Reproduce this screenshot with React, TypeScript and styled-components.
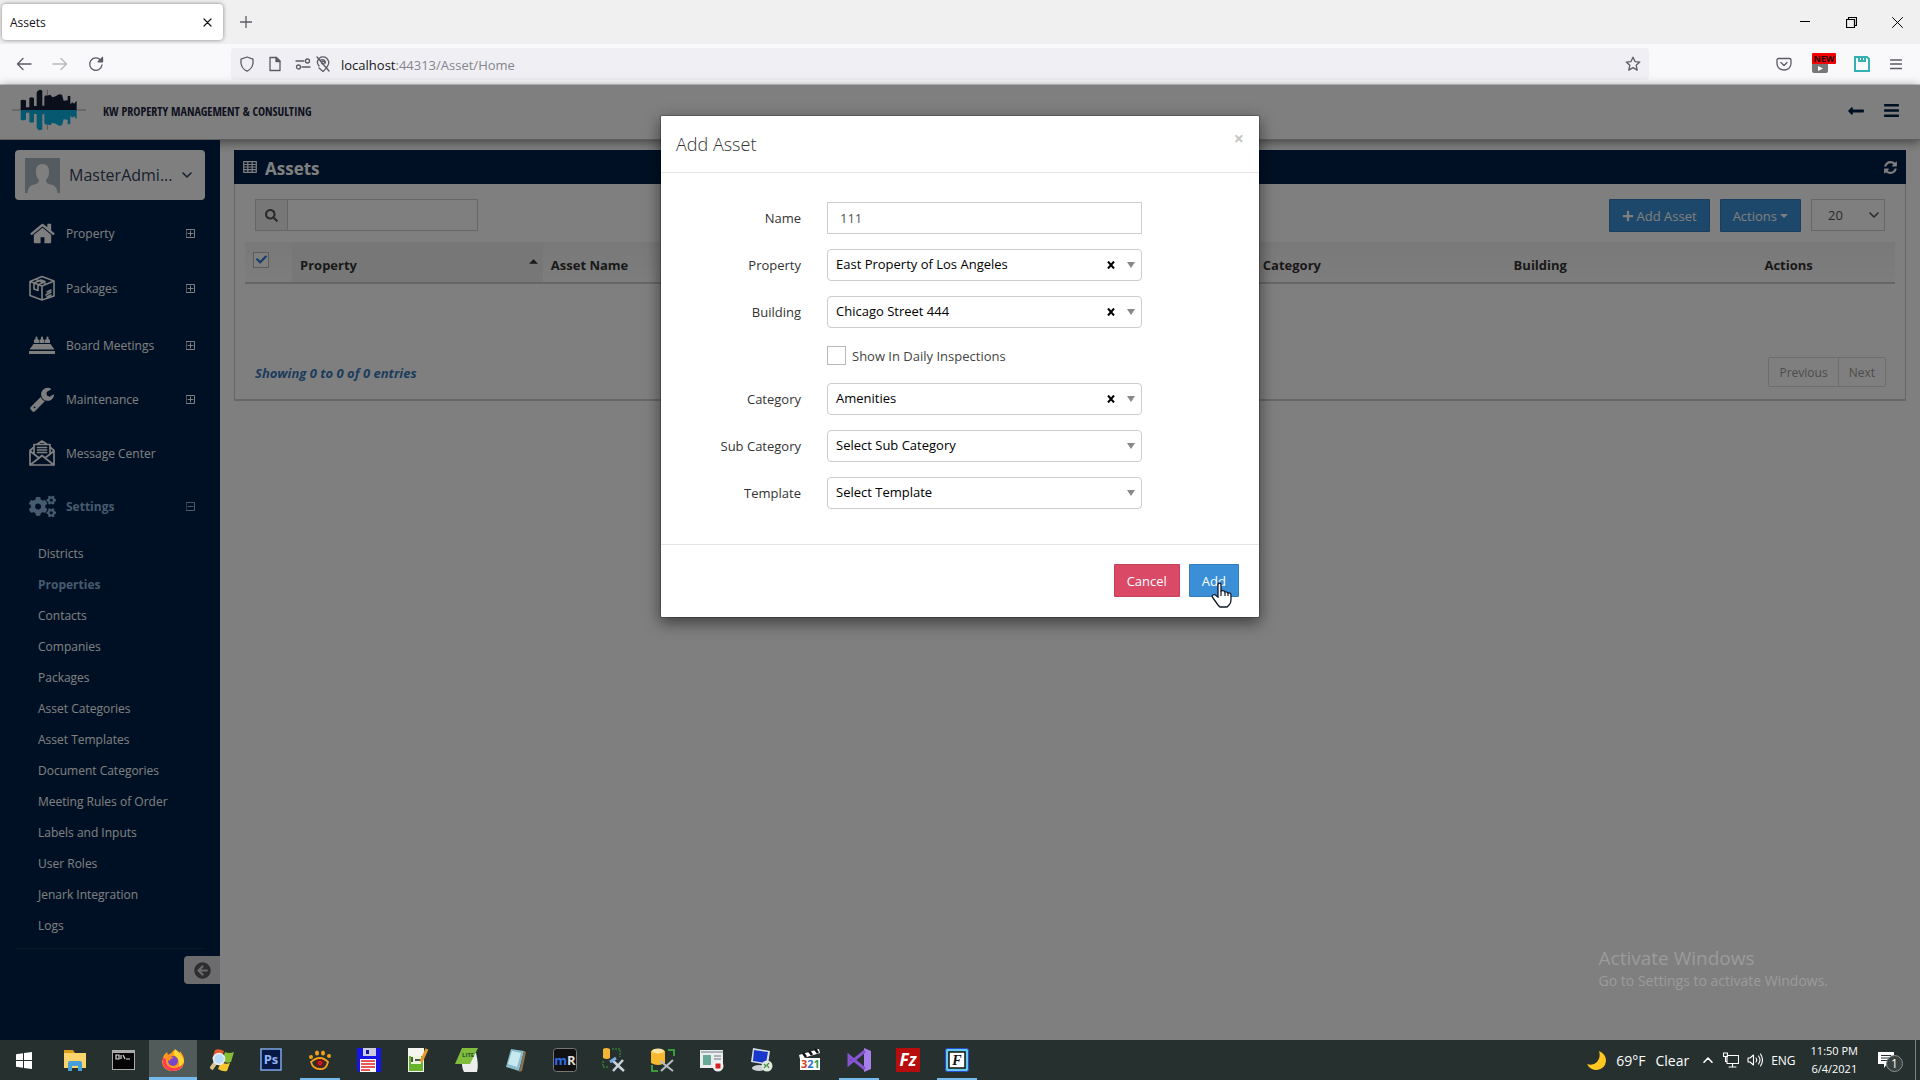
import React, { useState } from 'react';
import styled, { createGlobalStyle, css } from 'styled-components';
import { FaArrowCircleLeft, FaBars, FaCogs, FaLongArrowAltLeft, FaPlus, FaSearch, FaCheck } from 'react-icons/fa';

const colors = {
  navy: '#002048',
  blue: '#3b8fd6',
  red: '#da4a67',
  border: '#cccccc',
  taskbar: '#25302f',
};

const GlobalStyle = createGlobalStyle`
  * { box-sizing: border-box; }
  body { margin: 0; font-family: "Open Sans", "Noto Sans", sans-serif; font-size: 13px; color: #333; }
  button, input, select { font: inherit; color: inherit; margin: 0; }
  button { border: 0; padding: 0; background: none; cursor: pointer; }
  a { color: inherit; text-decoration: none; }
  ul { list-style: none; margin: 0; padding: 0; }
  svg { display: block; flex: none; }
`;

const Screen = styled.div`
  min-height: 100vh;
  display: flex;
  flex-direction: column;
  overflow: hidden;
`;

/* ---------- browser ---------- */

const TabStrip = styled.div`
  height: 44px;
  background: #f0f0f0;
  display: flex;
  align-items: center;
  padding-left: 2px;
`;
const Tab = styled.div`
  width: 221px;
  height: 36px;
  padding: 0 8px;
  display: flex;
  align-items: center;
  justify-content: space-between;
  background: #fff;
  border-radius: 4px;
  box-shadow: 0 0 4px rgba(0, 0, 0, 0.45);
  font-size: 12px;
  color: #15141a;
`;
const ChromeButton = styled.button<{ $w?: number; $faded?: boolean }>`
  width: ${(p) => p.$w ?? 36}px;
  height: 32px;
  display: flex;
  align-items: center;
  justify-content: center;
  color: #5b5b66;
  opacity: ${(p) => (p.$faded ? 0.4 : 1)};
`;
const WindowControls = styled.div`
  margin-left: auto;
  display: flex;
  & > button { color: #000; }
`;
const NavBar = styled.div`
  height: 41px;
  background: #f9f9fb;
  border-bottom: 1px solid #cccccc;
  display: flex;
  align-items: center;
  padding: 0 6px;
`;
const UrlField = styled.div`
  flex: 1;
  max-width: 1418px;
  margin-left: 117px;
  height: 32px;
  border-radius: 4px;
  background: #f0f0f4;
  display: flex;
  align-items: center;
  padding: 0 8px;
  color: #5b5b66;
`;
const UrlIcons = styled.div<{ $tight?: boolean }>`
  display: flex;
  align-items: center;
  gap: ${(p) => (p.$tight ? 4 : 12)}px;
  margin-right: ${(p) => (p.$tight ? 0 : 10)}px;
`;
const Address = styled.div`
  flex: 1;
  padding-top: 1px;
  color: #85858d;
  b { font-weight: 400; color: #15141a; }
`;
const Extensions = styled.div`
  margin-left: auto;
  display: flex;
`;
const NewBadge = styled.span`
  display: grid;
  justify-items: start;
  width: 24px;
  height: 22px;
  b {
    grid-area: 1 / 1;
    z-index: 1;
    width: 24px;
    height: 11px;
    border-radius: 1px;
    background: #f50000;
    color: #200000;
    font-size: 9px;
    line-height: 11px;
    text-align: center;
  }
  svg { grid-area: 1 / 1; margin-top: 8px; }
`;

/* ---------- page ---------- */

const Page = styled.div`
  position: relative;
  flex: 1;
  display: flex;
  flex-direction: column;
  background: #fff;
`;
const PageHeader = styled.header`
  height: 55px;
  display: flex;
  align-items: center;
  padding: 0 20px 2px 12px;
  border-bottom: 1px solid #bbb;
  box-shadow: 0 2px 10px rgba(0, 0, 0, 0.5);
  color: ${colors.navy};
`;
const Brand = styled.a`
  display: flex;
  align-items: center;
  gap: 17px;
  color: #1c2440;
  font: 700 12px "Open Sans Condensed", "Roboto Condensed", "Liberation Sans Narrow", "Liberation Sans", sans-serif;
`;
const HeaderTools = styled.div`
  margin-left: auto;
  display: flex;
  gap: 18px;
`;
const Columns = styled.div`
  flex: 1;
  display: flex;
`;
const Sidebar = styled.nav`
  position: relative;
  width: 220px;
  flex: none;
  background: ${colors.navy};
  color: #fff;
  padding: 10px 0 0;
  display: flex;
  flex-direction: column;
`;
const UserButton = styled.button`
  margin: 0 15px 7px;
  height: 50px;
  padding: 0 18px 0 10px;
  display: flex;
  align-items: center;
  gap: 9px;
  border-radius: 4px;
  background: #fff;
  color: #33425c;
  font-size: 16px;
  svg:last-child { margin-left: auto; }
`;
const active = css`
  color: #8bb4dd;
  font-weight: 700;
`;
const MenuLink = styled.a<{ $active?: boolean; $h: number }>`
  height: ${(p) => p.$h}px;
  padding: 0 25px 0 29px;
  display: grid;
  grid-template-columns: 26px 1fr 9px;
  column-gap: 11px;
  align-items: center;
  font-size: 12px;
  ${(p) => p.$active && active}
`;
const SubMenu = styled.ul`
  margin: 7px 15px 0;
  padding-bottom: 7px;
  border-bottom: 1px solid #18324f;
`;
const SubLink = styled.a<{ $active?: boolean }>`
  height: 31px;
  padding-left: 23px;
  display: flex;
  align-items: center;
  font-size: 12px;
  ${(p) => p.$active && active}
`;
const CollapseButton = styled.button`
  align-self: flex-end;
  margin-top: 7px;
  width: 36px;
  height: 28px;
  padding-left: 10px;
  border-radius: 4px 0 0 4px;
  background: #d8d8de;
  color: #5c5c5f;
`;
const Content = styled.main`
  flex: 1;
  min-width: 0;
  padding: 10px 14px 0;
`;
const Panel = styled.section`
  border: 1px solid ${colors.border};
  border-top: 0;
  border-bottom-width: 2px;
`;
const PanelHeading = styled.header`
  height: 34px;
  margin: 0 -1px;
  padding: 0 8px 0 9px;
  display: flex;
  align-items: center;
  gap: 8px;
  background: ${colors.navy};
  color: #fff;
  h1 { margin: 0; padding-top: 2px; font-size: 17px; font-weight: 700; }
  button { margin-left: auto; }
`;
const Toolbar = styled.div`
  display: flex;
  gap: 10px;
  padding: 15px 20px 10px;
`;
const SearchGroup = styled.label`
  width: 223px;
  height: 32px;
  margin-right: auto;
  display: flex;
  border: 1px solid ${colors.border};
  span {
    width: 32px;
    display: flex;
    align-items: center;
    justify-content: center;
    background: #eee;
    border-right: 1px solid ${colors.border};
    color: #555;
  }
  input { flex: 1; min-width: 0; border: 0; outline: 0; background: #fff; }
`;
const Button = styled.button<{ $tone?: 'red' }>`
  height: 33px;
  padding: 0 12px;
  display: flex;
  align-items: center;
  gap: 3px;
  border: 1px solid rgba(0, 0, 0, 0.12);
  border-radius: 1px;
  background: ${(p) => (p.$tone === 'red' ? colors.red : colors.blue)};
  color: #fff;
`;
const PageSize = styled.div`
  width: 74px;
  height: 32px;
  display: flex;
  align-items: center;
  padding: 0 5px 0 16px;
  border: 1px solid ${colors.border};
  color: #555;
  select { flex: 1; min-width: 0; border: 0; padding: 0; background: none; appearance: none; outline: 0; }
`;
const TableWrap = styled.div`
  padding: 0 10px;
`;
const Table = styled.table`
  width: 100%;
  table-layout: fixed;
  border-collapse: separate;
  border-spacing: 0;
`;
const Th = styled.th<{ $sorted?: boolean }>`
  height: 42px;
  padding: 5px 8px 0;
  border-bottom: 2px solid ${colors.border};
  background: ${(p) => (p.$sorted ? '#efefef' : 'linear-gradient(#f2f2f2, #fbfbfb)')};
  text-align: left;
  color: #333;
`;
const SortLabel = styled.div`
  display: flex;
  justify-content: space-between;
  padding-right: 5px;
  & > svg { margin-top: 3px; }
  margin-right: -8px;
`;
const CheckBox = styled.input<{ $tall?: boolean }>`
  appearance: none;
  display: block;
  flex: none;
  width: ${(p) => (p.$tall ? 19 : 16)}px;
  height: ${(p) => (p.$tall ? 19 : 16)}px;
  margin: 0;
  border: 1px solid #b8b8b8;
  background: #fff;
`;
const HeadCheck = styled.label`
  display: grid;
  width: 16px;
  margin-top: -10px;
  & > * { grid-area: 1 / 1; place-self: center; }
  svg { color: #2a7bd0; }
`;
const PanelFooter = styled.footer`
  display: flex;
  align-items: center;
  justify-content: space-between;
  padding: 73px 19px 12px 20px;
  em { padding-top: 2px; font-weight: 700; color: #3879b9; }
`;
const Pager = styled.div`
  display: flex;
  height: 30px;
  border: 1px solid #ddd;
  border-radius: 2px;
  button { padding: 0 10px; color: #999; font-size: 12px; }
  button + button { border-left: 1px solid #ddd; }
`;

/* ---------- dialog ---------- */

const Backdrop = styled.div`
  position: absolute;
  inset: 0;
  padding-top: 30px;
  display: flex;
  justify-content: center;
  align-items: flex-start;
  background: rgba(0, 0, 0, 0.5);
`;
const Dialog = styled.div`
  width: 600px;
  border: 1px solid rgba(0, 0, 0, 0.2);
  border-radius: 2px;
  background: #fff;
  background-clip: padding-box;
  box-shadow: 0 5px 15px rgba(0, 0, 0, 0.5);
`;
const DialogHeader = styled.header`
  height: 57px;
  padding: 0 15px;
  display: flex;
  align-items: center;
  justify-content: space-between;
  border-bottom: 1px solid #e5e5e5;
  h2 { margin: 0; font-size: 18px; font-weight: 300; }
  button { align-self: flex-start; margin-top: 13px; color: #c6c6c6; font-size: 18px; line-height: 18px; font-weight: 700; }
`;
const Form = styled.form`
  display: grid;
  grid-template-columns: 140px 315px;
  column-gap: 26px;
  row-gap: 15px;
  align-items: center;
  padding: 29px 0 35px;
`;
const FieldLabel = styled.label`
  text-align: right;
`;
const TextField = styled.input`
  height: 32px;
  padding: 0 12px;
  border: 1px solid ${colors.border};
  outline: 0;
  color: #555;
`;
const SelectField = styled.div`
  height: 32px;
  display: flex;
  align-items: center;
  padding: 0 6px 0 8px;
  border: 1px solid ${colors.border};
  border-radius: 4px;
  color: #000;
  select { flex: 1; min-width: 0; border: 0; padding: 0 0 2px; background: none; appearance: none; outline: 0; }
  button { margin-right: 12px; padding-bottom: 1px; }
`;
const CheckLine = styled.label`
  grid-column: 2;
  height: 25px;
  display: flex;
  align-items: center;
  gap: 6px;
  color: #444;
`;
const DialogFooter = styled.footer`
  display: flex;
  justify-content: flex-end;
  gap: 9px;
  padding: 19px 20px 20px;
  border-top: 1px solid #e5e5e5;
`;
const PointerAnchor = styled.div`
  position: relative;
  & > svg { position: absolute; left: 22px; top: 18px; pointer-events: none; }
`;
const Watermark = styled.div`
  position: absolute;
  right: 92px;
  bottom: 48px;
  color: #9b9b9b;
  font-size: 14px;
  line-height: 22px;
  strong { display: block; font-weight: 400; font-size: 19px; line-height: 24px; }
`;

/* ---------- taskbar ---------- */

const Taskbar = styled.footer`
  height: 40px;
  background: ${colors.taskbar};
  color: #fff;
  display: flex;
  justify-content: space-between;
`;
const Apps = styled.div`
  display: flex;
  gap: 1px;
  padding-left: 2px;
`;
const AppButton = styled.button<{ $open?: boolean; $focused?: boolean }>`
  width: 48px;
  height: 40px;
  padding-top: 3px;
  display: flex;
  align-items: center;
  justify-content: center;
  border-bottom: 3px solid transparent;
  ${(p) => p.$open && css`
    background: linear-gradient(#76b9ed, #76b9ed) center bottom / 40px 2px no-repeat;
    background-origin: border-box;
    background-clip: border-box;
  `}
  ${(p) => p.$focused && css`
    background: #515b5a;
    border-bottom-color: #76b9ed;
  `}
`;
const Tray = styled.div`
  display: flex;
  align-items: center;
  font-size: 12px;
  padding-right: 4px;
`;
const Weather = styled.button`
  display: flex;
  align-items: center;
  gap: 10px;
  font-size: 14px;
  color: #fff;
  margin-right: 14px;
`;
const TrayIcons = styled.div`
  display: flex;
  align-items: center;
  gap: 8px;
  & > svg:first-child { margin-right: 2px; }
`;
const Clock = styled.time`
  margin: 0 20px 0 15px;
  text-align: center;
  line-height: 18px;
  font-size: 11px;
`;
const Notice = styled.button`
  position: relative;
  width: 25px;
  height: 26px;
  span {
    position: absolute;
    left: 8px;
    top: 8px;
    width: 17px;
    height: 17px;
    border: 1px solid #8b9190;
    border-radius: 50%;
    background: #38403f;
    color: #fff;
    font-size: 12px;
    line-height: 15px;
  }
`;
const DesktopEdge = styled.div`
  width: 1px;
  height: 40px;
  margin-left: 12px;
  background: #7c8382;
`;

/* ---------- drawings ---------- */

type IconProps = { w?: number; h?: number; box?: string; children: React.ReactNode };
const Line = ({ w = 16, h = w, box = '0 0 16 16', children }: IconProps) => (
  <svg width={w} height={h} viewBox={box} fill="none" stroke="currentColor" strokeWidth="1.3" strokeLinecap="round" strokeLinejoin="round" aria-hidden="true">{children}</svg>
);
const Solid = ({ w = 16, h = w, box = '0 0 1792 1792', children }: IconProps) => (
  <svg width={w} height={h} viewBox={box} fill="currentColor" aria-hidden="true">{children}</svg>
);

const Skyline = () => {
  const d = 'M32 75V46q5-3 16 0V67H58V39q7-4 14 0V63H80V22q7-13 17-5V62H103V36q3-7 8-4l10-3 6 8 10-3 10-6 9 1 5 18 12-1V34q4-3 8 0V58l6-6 5 4 8-9V75z';
  return (
    <svg width="74" height="52" viewBox="6 0 222 156" aria-hidden="true">
      <path d="M6 75H228M112 14V134" stroke="#a5a5a5" strokeWidth="3" />
      <path d={d} fill="#171f38" />
      <path d={d} fill="#0ab0e0" transform="matrix(1 0 0 -1 0 150)" />
    </svg>
  );
};
const Avatar = () => (
  <svg width="35" height="35" viewBox="0 0 35 35" aria-hidden="true">
    <path fill="#a9b8c2" d="M0 0h35v35H0z" />
    <path fill="#fff" d="M17.500 6c5 0 7 4 6.500 9-.5 4-1.500 5-3 7 .3 3 1 3.500 5 4.500 4 1.200 6 3 6.500 8.500H2.500c.5-5.500 2.500-7.300 6.500-8.500 4-1 4.700-1.500 5-4.500-1.500-2-2.500-3-3-7C10.500 10 12.500 6 17.500 6z" />
  </svg>
);
const Home = () => <Solid w={27}><path d="M1472 992v480q0 26-19 45t-45 19h-384v-384h-256v384h-384q-26 0-45-19t-19-45v-480q0-1 .5-3t.5-3l575-474 575 474q1 2 1 6zm223-69l-62 74q-8 9-21 11h-3q-13 0-21-7l-692-577-692 577q-12 8-24 7-13-2-21-11l-62-74q-8-10-7-23.500t11-21.500l719-599q32-26 76-26t76 26l244 204v-195q0-14 9-23t23-9h192q14 0 23 9t9 23v408l219 182q10 8 11 21.500t-7 23.500z" /></Solid>;
const Wrench = () => <Solid w={26}><path d="M448 1472q0-26-19-45t-45-19-45 19-19 45 19 45 45 19 45-19 19-45zm644-420l-682 682q-37 37-90 37-52 0-91-37l-106-108q-38-36-38-90 0-53 38-91l681-681q39 98 114.500 173.500t173.500 114.500zm634-435q0 39-23 106-47 134-164.500 217.500t-258.500 83.500q-185 0-316.500-131.500t-131.500-316.500 131.500-316.500 316.500-131.500q58 0 121.500 16.500t107.500 46.500q16 11 16 28t-16 28l-293 169v224l193 107q5-3 79-48.500t135.500-81 70.500-35.500q15 0 23.500 10t8.500 25z" /></Solid>;
const Refresh = () => <Solid w={15}><path d="M1639 1056q0 5-1 7-64 268-268 434.500t-478 166.500q-146 0-282.500-55t-243.500-157l-129 129q-19 19-45 19t-45-19-19-45v-448q0-26 19-45t45-19h448q26 0 45 19t19 45-19 45l-137 137q71 66 161 102t187 36q134 0 250-65t186-179q11-17 53-117 8-23 30-23h192q13 0 22.500 9.500t9.500 22.500zm25-800v448q0 26-19 45t-45 19h-448q-26 0-45-19t-19-45 19-45l138-138q-148-137-349-137-134 0-250 65t-186 179q-11 17-53 117-8 23-30 23h-199q-13 0-22.500-9.500t-9.500-22.500v-7q65-268 270-434.500t480-166.500q146 0 284 55.500t245 156.500l130-129q19-19 45-19t45 19 19 45z" /></Solid>;
const Box = () => (
  <Line w={26} box="0 0 26 26">
    <path strokeWidth="1.600" d="M1 6.500 13 1.500l12 4.500v15L13 25 1 20.500zM1 6.500 13 11l12-5M13 11v14M5 8v6l4 1.500V10l7-3.500-4-1.500zM8 5l8 3M22 15l-4 2M22 17l-5 3M22 20l-4 2" />
  </Line>
);
const Board = () => (
  <Solid w={26} h={18} box="0 0 26 18">
    <path d="M5 7V4l1.500-1V1.500a1 1 0 0 1 2 0V3L10 4v3zM10.500 7V4L12 3V1.500a1 1 0 0 1 2 0V3l1.500 1v3zM16 7V4l1.500-1V1.500a1 1 0 0 1 2 0V3L21 4v3zM4.500 8h17l4 5.500H.5zM0 15h26v3H0z" />
  </Solid>
);
const Mail = () => (
  <Line w={26} box="0 0 26 26">
    <path strokeWidth="1.700" d="M5 7 1 10.500V25h24V10.500L21 7M8.500 4 13 1l4.500 3M5 14V4.500h16V14M8.500 7.500h9M8.500 10h9M8.500 12.500h9M1 11l9 7-9 7M25 11l-9 7 9 7M10 18l3-2.500 3 2.500" />
  </Line>
);
const Expander = ({ open }: { open?: boolean }) => (
  <Line w={9} box="0 0 9 9"><path strokeWidth="1" d={`M.5.500h8v8h-8zM2 4.500h5${open ? '' : 'M4.500 2v5'}`} /></Line>
);
const Caret = ({ up }: { up?: boolean }) => (
  <Solid w={up ? 9 : 8} h={up ? 5 : 4} box="0 0 10 5"><path d={up ? 'M0 5 5 0l5 5z' : 'M0 0h10L5 5z'} /></Solid>
);
const Chevron = ({ up }: { up?: boolean }) => (
  <Line w={10} h={6} box="0 0 10 6"><path strokeWidth="1.600" d={up ? 'M1 5.200 5 1l4 4.200' : 'M1 1l4 4 4-4'} /></Line>
);
const Grid = () => (
  <Line w={14} h={12} box="0 0 14 12"><path strokeWidth="1.200" d="M.7.700h12.600v10.600H.7zM.7 3.500h12.600M.7 6h12.600M.7 8.700h12.600M4.800 1v10M9.200 1v10" /></Line>
);
const Hand = () => (
  <svg width="21" height="26" viewBox="0 0 21 26" aria-hidden="true">
    <path d="M7 15V3q0-2 1.500-2T10 3v6q3-1 4 1 2-.7 3 1 3-.5 3 2v5q0 3-2 5l-2 2H9l-2-2-5-7q-1.500-2 0-3 2-1 3.500 1z" fill="#fff" stroke="#101828" strokeWidth="1.300" />
    <path d="M10 9v5M14 10v4M17 11v3" stroke="#101828" strokeWidth="1.200" />
  </svg>
);

const taskIcons: { name: string; open?: boolean; focused?: boolean; art: React.ReactNode }[] = [
  { name: 'Start', art: <path fill="#fff" d="M2 6.200 9 5.200V12H2zM10 5 18 4v8h-8zM2 13h7v6.800l-7-1zM10 13h8v8l-8-1z" /> },
  { name: 'Files', art: <><path fill="#dc9e1e" d="M1 2h9l2 3v5H1z" /><path fill="#fbd46b" d="M1 5h22v15H1z" /><path fill="#459fdb" d="M5 23v-8q0-2 2-2h10q2 0 2 2v8h-4v-5H9v5z" /></> },
  { name: 'Prompt', art: <><path fill="#aaa" d="M0 2h23v20H0z" /><path fill="#050505" d="M1 5h21v16H1z" /><path stroke="#ddd" strokeWidth="1.200" fill="none" d="M4 7h3v4H4zM9 7v4M11 7l2 4M14 11h4" /></> },
  { name: 'Firefox', focused: true, art: <><path fill="#ff9a1f" d="M2 10q1-4 4-6l1 3q4-2 6-5 4 3 4 6 2-3 2-5 5 6 4 12-2 8-11 8Q2 23 1 14z" /><path fill="#ff3d57" d="M2 10q-2 12 10 13 8 0 10-7-5 5-11 4-7-2-6-9z" /><path fill="#ffd72e" d="M14 1q7 5 9 12-2 5-5 6 1-9-5-12-1-3 1-6z" /><circle cx="12" cy="13" r="5" fill="#7646c8" /><path fill="#ff8b20" d="M5 9q5-2 8 1-4 0-4 3-3-1-4-4z" /></> },
  { name: 'Finder', art: <><path fill="#e75c2c" d="M5 2q4-2 9 1l-3 9q-4-3-9-1z" /><path fill="#86bd36" d="M15 4q4 2 9 0l-3 10q-4 2-9-1z" /><path fill="#f6c62d" d="M11 14q4 3 9 1l-3 8q-4 1-9-2z" /><path stroke="#d8c48a" strokeWidth="4" d="m6 14-5 7" /><circle cx="9" cy="11" r="5.500" fill="#b8dcfa" stroke="#e9eef2" strokeWidth="1.500" /></> },
  { name: 'Photo editor', art: <><path fill="#071847" stroke="#7ea6e8" strokeWidth="1.500" d="M2 1h20v21H2z" /><text x="12" y="16" textAnchor="middle" fontSize="13" fontWeight="700" fill="#8fb6f5">Ps</text></> },
  { name: 'Paw', open: true, art: <><g fill="#f5a01b"><ellipse cx="3" cy="9" rx="2" ry="2" /><ellipse cx="9" cy="5" rx="2" ry="2.500" /><ellipse cx="15" cy="5" rx="2" ry="2.500" /><ellipse cx="21" cy="8" rx="2" ry="2" /></g><path d="M3 14q9-8 17 0-2 8-8 7-7 0-9-7z" stroke="#f5a01b" strokeWidth="1.800" fill="#25302f" /><circle cx="12" cy="15" r="4" fill="#7d1010" /><circle cx="12" cy="15" r="1.500" stroke="#e33" fill="none" /></> },
  { name: 'Commander', art: <><path fill="#1515e8" d="M0 0h24v24H2l-2-2z" /><path fill="#ccd" d="M6 0h13v8H6z" /><path fill="#1515a0" d="M9 2h3v4H9z" /><path fill="#fff" d="M3 11h16v13H3z" /><path stroke="#e02020" strokeWidth="1.500" d="M4 13h14M4 16h14M4 19h14M4 22h9" /></> },
  { name: 'Notes', art: <><path fill="#f5f5f0" d="M2 0h16v24H2z" /><path fill="#67b52e" d="M3 8h14v15H3z" /><path fill="#e8f5d8" d="M5 8h10v8H5z" /><path d="M6 9v5M9 12h6" stroke="#222" strokeWidth="1.500" /><path stroke="#e59a2a" strokeWidth="3" d="m21 1-6 13" /></> },
  { name: 'Spreadsheet', art: <><path fill="#ededed" d="M7 5h14q3 12 1 19H9q-3-4-2-19z" /><path fill="#80bd3d" d="M7 0h16l-8 16H0z" /><text x="7" y="9" fontSize="6" fontWeight="700" fill="#25502a">LITE</text></> },
  { name: 'Notepad', art: <><path fill="#89bdcc" d="m7 1 13 2-5 20-13-4z" /><path fill="#c8e9ef" d="m8 3 9 2-4 14-9-3z" /><path fill="#8b7355" d="m20 3 2 1-4 19-3 1z" /></> },
  { name: 'Remote', art: <><rect x=".5" y=".5" width="23" height="23" rx="3" fill="#111" stroke="#777" /><text x="12" y="17" textAnchor="middle" fontSize="13" fontWeight="700"><tspan fill="#2e6be8">m</tspan><tspan fill="#ddd">R</tspan></text></> },
  { name: 'Data tools', art: <><path fill="#f3b735" d="M1 1q3-2 7 0v9q-3 2-7 0z" /><path fill="none" stroke="#39a13d" strokeDasharray="2 1" d="M10 1h8v8M1 13v6h6" /><path stroke="#c9d4dd" strokeWidth="2.500" d="m10 12 12 11M21 12 11 23" /><path stroke="#79aee0" strokeWidth="3" d="m8 14 6-4" /></> },
  { name: 'Database', art: <><path fill="#f9b92e" d="M0 3q7-4 14 0v12q-7 4-14 0z" /><ellipse cx="7" cy="3" rx="6" ry="2.500" fill="#ffe5a0" /><path fill="none" stroke="#3b9a3b" strokeWidth="2" d="M17 2h6v6M1 17v6h6" /><path stroke="#b8bfc2" strokeWidth="2" d="m9 13 13 10M22 12 10 23" /></> },
  { name: 'Recorder', art: <><path fill="#e9edf0" d="M0 2h23v18H0z" /><path fill="#66aa97" d="M3 7h8v10H3z" /><path stroke="#98a0a5" strokeWidth="1.500" d="M14 8h7M14 11h7M1 4h22" /><circle cx="18" cy="18" r="5.500" fill="#f2f2f2" /><path fill="#d42222" d="M15.500 15.500h5v5h-5z" /></> },
  { name: 'Display', art: <><path fill="#d7dfe4" d="m4 0 17 3-2 14-17-3z" /><path fill="#1838cc" d="m5 2 14 2-2 11-13-2z" /><ellipse cx="10" cy="20" rx="7" ry="3" fill="#cdd2d5" /><circle cx="18" cy="18" r="5.500" fill="#dfe9df" /><path d="m15 16 2 2-2 2M20 15l-2 2 2 3" stroke="#3b8a3b" strokeWidth="1.200" fill="none" /></> },
  { name: 'Media', art: <><path fill="#fff" d="m1 7 20-6 1 4-20 6zM2 10h20v12H2z" /><path stroke="#111" strokeWidth="2.500" d="m5 5 3 4M11 3l3 4M17 1l3 4" /><text x="3" y="20" fontSize="11" fontWeight="700"><tspan fill="#d5402a">3</tspan><tspan fill="#2d72c4">2</tspan><tspan fill="#329a3c">1</tspan></text></> },
  { name: 'Studio', open: true, art: <><path fill="#a880ea" d="m17 0 7 3v18l-7 3z" /><path fill="none" stroke="#8654cf" strokeWidth="3" d="m18 3-16 13V8l16 13" /></> },
  { name: 'Transfer', art: <><path fill="#b80d0d" d="M0 0h24v24H0z" /><text x="12" y="18" textAnchor="middle" fontSize="17" fontStyle="italic" fontWeight="700" fill="#fff">Fz</text></> },
  { name: 'Fonts', open: true, art: <><rect x=".5" y=".5" width="23" height="23" rx="2" fill="#65c9e8" stroke="#2b48dc" /><path fill="#fff" stroke="#111" strokeWidth="1.500" d="M4 4h16v16H4z" /><text x="12" y="17" textAnchor="middle" fontSize="14" fontStyle="italic" fontWeight="700" fontFamily="Liberation Serif" fill="#111">F</text></> },
];

/* ---------- parts ---------- */

const menu = [
  { label: 'Property', icon: <Home />, fold: true, height: 52 },
  { label: 'Packages', icon: <Box />, fold: true, height: 58 },
  { label: 'Board Meetings', icon: <Board />, fold: true, height: 56 },
  { label: 'Maintenance', icon: <Wrench />, fold: true, height: 52 },
  { label: 'Message Center', icon: <Mail />, height: 56 },
  { label: 'Settings', icon: <FaCogs size={27} />, fold: true, open: true, height: 50 },
];
const settings = ['Districts', 'Properties', 'Contacts', 'Companies', 'Packages', 'Asset Categories', 'Asset Templates', 'Document Categories', 'Meeting Rules of Order', 'Labels and Inputs', 'User Roles', 'Jenark Integration', 'Logs'];

function Chooser({ label, value, clearable }: { label: string; value: string; clearable?: boolean }) {
  const id = label.toLowerCase().replace(' ', '-');
  return (
    <>
      <FieldLabel htmlFor={id}>{label}</FieldLabel>
      <SelectField>
        <select id={id} defaultValue={value}><option>{value}</option></select>
        {clearable && (
          <button type="button" aria-label={`Clear ${label}`}>
            <Line w={8} box="0 0 8 8"><path strokeWidth="2" strokeLinecap="butt" d="M1 .5l6 7M7 .5l-6 7" /></Line>
          </button>
        )}
        <Solid w={8} h={6} box="0 0 8 6"><path fill="#888" d="M0 0h8L4 6z" /></Solid>
      </SelectField>
    </>
  );
}

function Browser() {
  return (
    <>
      <TabStrip>
        <Tab>Assets
          <ChromeButton $w={16} aria-label="Close tab"><Line w={9} box="0 0 9 9"><path stroke="#15141a" strokeWidth="1.200" d="m1 1 7 7M8 1 1 8" /></Line></ChromeButton>
        </Tab>
        <ChromeButton $w={45} aria-label="New tab"><Line w={12} box="0 0 12 12"><path d="M6 .5v11M.5 6h11" /></Line></ChromeButton>
        <WindowControls>
          <ChromeButton $w={46} aria-label="Minimize"><Line w={10} box="0 0 10 10"><path strokeWidth="1" d="M0 4.500h10" /></Line></ChromeButton>
          <ChromeButton $w={46} aria-label="Restore"><Line w={11} box="0 0 11 11"><path strokeWidth="1.200" d="M.5 2.500h8v8h-8zM2.500 2.500v-2h8v8h-2" /></Line></ChromeButton>
          <ChromeButton $w={46} aria-label="Close"><Line w={11} box="0 0 11 11"><path strokeWidth="1" d="m.5.500 10 10M10.500.500l-10 10" /></Line></ChromeButton>
        </WindowControls>
      </TabStrip>
      <NavBar>
        <ChromeButton aria-label="Back"><Line><path d="M15 8H1.500M7 2.500 1.500 8 7 13.500" /></Line></ChromeButton>
        <ChromeButton $faded aria-label="Forward"><Line><path d="M1 8h13.500M9 2.500 14.500 8 9 13.500" /></Line></ChromeButton>
        <ChromeButton aria-label="Reload"><Line><path d="M14 9A6.200 6.200 0 1 1 12.500 4L14 5.500" /><path fill="currentColor" d="M14.500 1.500v4.300h-4.300z" /></Line></ChromeButton>
        <UrlField>
          <UrlIcons>
            <Line><path d="M8 1l6 2.200v4.300Q13 13 8 15.200 3 13 2 7.500V3.200z" /></Line>
            <Line><path d="M3 1.500h6.500L13 5v9.500H3z" /><path fill="currentColor" d="M9 1.500V5.500h4z" /></Line>
            <UrlIcons as="span" $tight>
              <Line><path d="M1 5h8M7 11h8" /><circle cx="12.500" cy="5" r="2" /><circle cx="3.500" cy="11" r="2" /></Line>
              <Line><path d="M4 12 8 15.500Q14 10 13.800 6 12.500.800 8 .8T2.300 6Q2.500 8 4 10M2 1l12 14M6 3.800q4-1 4.500 3" /><circle cx="8" cy="6.500" r="1.500" /></Line>
            </UrlIcons>
          </UrlIcons>
          <Address><b>localhost</b>:44313/Asset/Home</Address>
          <Line><path d="m8 1.200 2 4.400 4.800.5-3.600 3.200 1 4.800L8 11.600l-4.200 2.500 1-4.800L1.200 6.100 6 5.600z" /></Line>
        </UrlField>
        <Extensions>
          <ChromeButton aria-label="Pocket"><Line><path d="M2.500 2.500h11q1.500 0 1.500 1.500v4q-1 6-7 6T1 8V4q0-1.500 1.500-1.500zM5 6.500 8 9.500l3-3" /></Line></ChromeButton>
          <ChromeButton $w={44} aria-label="Video extension">
            <NewBadge>
              <svg width="16" height="12" viewBox="0 0 16 12" aria-hidden="true"><rect width="16" height="12" rx="2" fill="#777" /><path fill="#fff" d="m6 5 5 2.500L6 10z" /></svg>
              <b>NEW</b>
            </NewBadge>
          </ChromeButton>
          <ChromeButton $w={32} aria-label="Save page"><Line><path stroke="#34b1b4" strokeWidth="2" strokeLinejoin="miter" d="M1 1h12l2 2v12H1zM5 1v4h6V1M8 2v2" /></Line></ChromeButton>
          <ChromeButton aria-label="Menu"><Line w={12} box="0 0 12 12"><path d="M.5 2h11M.5 6h11M.5 10.500h11" /></Line></ChromeButton>
        </Extensions>
      </NavBar>
    </>
  );
}

function SideMenu() {
  return (
    <Sidebar>
      <UserButton><Avatar />MasterAdmi...<Chevron /></UserButton>
      <ul>
        {menu.map((m) => (
          <li key={m.label}>
            <MenuLink href="#" $active={m.open} $h={m.height}>{m.icon}<span>{m.label}</span>{m.fold && <Expander open={m.open} />}</MenuLink>
          </li>
        ))}
      </ul>
      <SubMenu>
        {settings.map((s) => <li key={s}><SubLink href="#" $active={s === 'Properties'}>{s}</SubLink></li>)}
      </SubMenu>
      <CollapseButton aria-label="Collapse menu"><FaArrowCircleLeft size={17} /></CollapseButton>
    </Sidebar>
  );
}

function AssetsPanel() {
  return (
    <Panel>
      <PanelHeading>
        <Grid /><h1>Assets</h1>
        <button aria-label="Refresh"><Refresh /></button>
      </PanelHeading>
      <Toolbar>
        <SearchGroup><span><FaSearch size={13} /></span><input aria-label="Search" /></SearchGroup>
        <Button><FaPlus size={12} />Add Asset</Button>
        <Button>Actions<Caret /></Button>
        <PageSize>
          <select aria-label="Rows per page" defaultValue="20"><option>20</option></select>
          <Chevron />
        </PageSize>
      </Toolbar>
      <TableWrap>
        <Table>
          <colgroup>
            <col style={{ width: '2.85%' }} /><col style={{ width: '15.2%' }} /><col style={{ width: '15.2%' }} /><col />
            <col style={{ width: '15.2%' }} /><col style={{ width: '15.2%' }} /><col style={{ width: '8.4%' }} />
          </colgroup>
          <thead>
            <tr>
              <Th><HeadCheck><CheckBox type="checkbox" defaultChecked aria-label="Select all" /><FaCheck size={11} /></HeadCheck></Th>
              <Th $sorted><SortLabel>Property<Caret up /></SortLabel></Th>
              <Th>Asset Name</Th>
              <Th />
              <Th>Category</Th>
              <Th>Building</Th>
              <Th>Actions</Th>
            </tr>
          </thead>
        </Table>
      </TableWrap>
      <PanelFooter>
        <em>Showing 0 to 0 of 0 entries</em>
        <Pager><button>Previous</button><button>Next</button></Pager>
      </PanelFooter>
    </Panel>
  );
}

function AddAssetDialog() {
  const [name, setName] = useState('111');
  return (
    <Dialog role="dialog" aria-labelledby="dialog-title">
      <DialogHeader><h2 id="dialog-title">Add Asset</h2><button aria-label="Close">×</button></DialogHeader>
      <Form>
        <FieldLabel htmlFor="name">Name</FieldLabel>
        <TextField id="name" value={name} onChange={(e) => setName(e.target.value)} />
        <Chooser label="Property" value="East Property of Los Angeles" clearable />
        <Chooser label="Building" value="Chicago Street 444" clearable />
        <CheckLine><CheckBox type="checkbox" $tall />Show In Daily Inspections</CheckLine>
        <Chooser label="Category" value="Amenities" clearable />
        <Chooser label="Sub Category" value="Select Sub Category" />
        <Chooser label="Template" value="Select Template" />
      </Form>
      <DialogFooter>
        <Button $tone="red">Cancel</Button>
        <PointerAnchor><Button>Add</Button><Hand /></PointerAnchor>
      </DialogFooter>
    </Dialog>
  );
}

function SystemBar() {
  return (
    <Taskbar>
      <Apps>
        {taskIcons.map((t) => (
          <AppButton key={t.name} aria-label={t.name} $open={t.open} $focused={t.focused}>
            <svg width="24" height="24" viewBox="0 0 24 24" aria-hidden="true">{t.art}</svg>
          </AppButton>
        ))}
      </Apps>
      <Tray>
        <Weather>
          <svg width="19" height="19" viewBox="0 0 19 19" aria-hidden="true"><path fill="#ffc71f" d="M12 0q7 3 7 10-1 8-9 9-7 0-10-6 6 2 10-2 4-5 2-11z" /></svg>
          <span>69°F</span><span>Clear</span>
        </Weather>
        <TrayIcons>
          <Chevron up />
          <Line><path strokeWidth="1.100" d="M4 3.500h11.500v8H4zM9.500 12v3M6 15h7M.5 1h4v3.500h-4zM2.500 4.500v5h1" /></Line>
          <Line><path strokeWidth="1.100" d="M1 6v4h2l3.500 3V3L3 6zM9 6q1.500 2 0 4M11.500 4q3 4 0 8M13.500 2q4 6 0 12" /></Line>
          <span>ENG</span>
        </TrayIcons>
        <Clock>11:50 PM<br />6/4/2021</Clock>
        <Notice aria-label="Notifications">
          <svg width="16" height="16" viewBox="0 0 16 16" aria-hidden="true"><path fill="#fff" d="M0 0h16v12H9l-3 4v-4H0z" /><path stroke={colors.taskbar} d="M3 3.500h10M3 6h10M3 8.500h7" /></svg>
          <span>1</span>
        </Notice>
        <DesktopEdge />
      </Tray>
    </Taskbar>
  );
}

export default function App() {
  return (
    <Screen>
      <GlobalStyle />
      <Browser />
      <Page>
        <PageHeader>
          <Brand href="#"><Skyline />KW PROPERTY MANAGEMENT &amp; CONSULTING</Brand>
          <HeaderTools><FaLongArrowAltLeft size={18} /><FaBars size={17} /></HeaderTools>
        </PageHeader>
        <Columns>
          <SideMenu />
          <Content><AssetsPanel /></Content>
        </Columns>
        <Backdrop>
          <AddAssetDialog />
          <Watermark><strong>Activate Windows</strong>Go to Settings to activate Windows.</Watermark>
        </Backdrop>
      </Page>
      <SystemBar />
    </Screen>
  );
}
